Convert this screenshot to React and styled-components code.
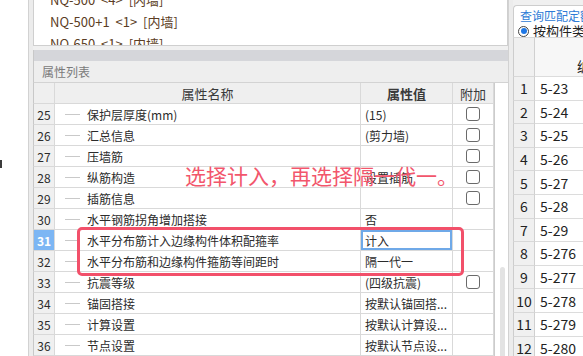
import React from "react";
import styled, { createGlobalStyle } from "styled-components";

const GlobalStyle = createGlobalStyle`
  html, body {
    margin: 0;
    padding: 0;
    background: #ffffff;
    overflow: hidden;
  }
  body {
    font-family: "Noto Sans CJK SC", "Noto Sans", sans-serif;
  }
`;

const Screen = styled.div`
  display: flex;
  width: 583px;
  height: 356px;
  overflow: hidden;
  background: #ffffff;
`;

const Gutter = styled.div`
  width: 28px;
  flex: none;
  padding-top: 160px;
  box-sizing: border-box;
  background: #ffffff;
`;

const GutterMark = styled.div`
  width: 2px;
  height: 8px;
  background: #3c3c3c;
`;

const Splitter = styled.div`
  width: 5px;
  flex: none;
  box-sizing: border-box;
  background: #ececec;
  border-left: 1px solid #d2d2d2;
`;

const MainPanel = styled.div`
  width: 475px;
  flex: none;
  display: flex;
  flex-direction: column;
  background: #f0f0f0;
`;

const ListBox = styled.div`
  height: 46px;
  flex: none;
  box-sizing: border-box;
  background: #ffffff;
  border: 1px solid #cfcfcf;
  border-top: none;
  overflow: hidden;
`;

const ListInner = styled.div`
  margin-top: -11px;
  padding-left: 16px;
`;

const ListItem = styled.div`
  height: 22px;
  line-height: 22px;
  font-size: 13px;
  color: #5b3d24;
  white-space: nowrap;
  word-spacing: 3px;
`;

const TitleBar = styled.div`
  height: 11px;
  flex: none;
  margin-top: 4px;
  background: #d5d6da;
  border-left: 1px solid #c8c8c8;
`;

const Caption = styled.div`
  height: 22px;
  flex: none;
  box-sizing: border-box;
  padding-left: 8px;
  line-height: 21px;
  font-size: 12px;
  color: #7a7a7a;
  background: #eeeeee;
  border-left: 1px solid #c8c8c8;
  border-bottom: 1px solid #d3d3d3;
`;

const Body = styled.div`
  flex: 1;
  min-height: 0;
  display: flex;
`;

const TableArea = styled.div`
  position: relative;
  width: 461px;
  flex: none;
  background: #ffffff;
  overflow: hidden;
`;

const Row = styled.div`
  display: grid;
  grid-template-columns: 22px 306px 92px 41px;
  height: 21px;
  font-size: 12px;
  color: #2b2b2b;
`;

const Cell = styled.div`
  box-sizing: border-box;
  height: 21px;
  display: flex;
  align-items: center;
  border-right: 1px solid #d9d9d9;
  border-bottom: 1px solid #d9d9d9;
  overflow: hidden;
  white-space: nowrap;
`;

const NumCell = styled(Cell)`
  justify-content: center;
  border-left: 1px solid #c8c8c8;
  background: ${(p) => (p.$active ? "#7cb6f4" : "#f0f0f0")};
  color: ${(p) => (p.$active ? "#ffffff" : "#2b2b2b")};
  font-weight: ${(p) => (p.$active ? 700 : 400)};
`;

const HeadCell = styled(Cell)`
  justify-content: center;
  background: #efefef;
  color: #3a3a3a;
  font-size: 13px;
  font-weight: ${(p) => (p.$bold ? 700 : 400)};
  border-left: ${(p) => (p.$first ? "1px solid #c8c8c8" : "none")};
`;

const NameCell = styled(Cell)`
  padding-left: 10px;
`;

const TreeStub = styled.span`
  width: 15px;
  height: 1px;
  flex: none;
  margin-right: 7px;
  background: #c9c9c9;
`;

const ValueCell = styled(Cell)`
  padding-left: 4px;
  box-shadow: ${(p) => (p.$editing ? "inset 0 0 0 2px #6fa9e8" : "none")};
`;

const CheckCell = styled(Cell)`
  justify-content: center;
`;

const CheckBox = styled.span`
  width: 14px;
  height: 14px;
  box-sizing: border-box;
  border: 1px solid #6a6a6a;
  border-radius: 3px;
  background: #ffffff;
`;

const Scroll = styled.div`
  width: 14px;
  flex: none;
  box-sizing: border-box;
  padding: 184px 0 0 5px;
  background: #ffffff;
  border-left: 1px solid #cccccc;
`;

const Thumb = styled.div`
  width: 5px;
  height: 100px;
  border-radius: 3px;
  background: #e3e3e3;
`;

const RedBox = styled.div`
  position: absolute;
  left: 44px;
  top: 144px;
  width: 387px;
  height: 49px;
  box-sizing: border-box;
  border: 3px solid #f2506a;
  border-radius: 5px;
  pointer-events: none;
`;

const RedNote = styled.div`
  position: absolute;
  left: 152px;
  top: 79px;
  font-size: 21px;
  line-height: 26px;
  color: #f2566c;
  white-space: nowrap;
`;

const RightPanel = styled.div`
  flex: 1;
  min-width: 0;
  display: flex;
  flex-direction: column;
  padding-top: 5px;
  background: #f0f0f0;
  overflow: hidden;
`;

const Tab = styled.div`
  height: 20px;
  flex: none;
  box-sizing: border-box;
  padding-left: 6px;
  line-height: 19px;
  font-size: 12px;
  color: #2e7bd6;
  white-space: nowrap;
  background: #ffffff;
  border: 1px solid #cdcdcd;
  border-right: none;
  border-bottom: none;
  border-top-left-radius: 4px;
`;

const RadioRow = styled.div`
  height: 12px;
  flex: none;
  display: flex;
  align-items: center;
  gap: 4px;
  padding-left: 4px;
  font-size: 13px;
  line-height: 12px;
  color: #222222;
  white-space: nowrap;
  background: #ffffff;
  border-left: 1px solid #cdcdcd;
`;

const Radio = styled.span`
  width: 11px;
  height: 11px;
  flex: none;
  box-sizing: border-box;
  display: flex;
  align-items: center;
  justify-content: center;
  border: 1px solid #444444;
  border-radius: 50%;

  &::after {
    content: "";
    width: 6px;
    height: 6px;
    border-radius: 50%;
    background: #1f77e5;
  }
`;

const CodeRow = styled.div`
  display: grid;
  grid-template-columns: 22px 1fr;
  height: ${(p) => (p.$head ? "40px" : "23.6px")};
  flex: none;
  font-size: 14px;
  color: #222222;
`;

const CodeNum = styled.div`
  box-sizing: border-box;
  display: flex;
  align-items: center;
  justify-content: center;
  background: #f0f0f0;
  border-left: 1px solid #cdcdcd;
  border-right: 1px solid #d0d0d0;
  border-bottom: 1px solid #d8d8d8;
  border-top: ${(p) => (p.$head ? "1px solid #d8d8d8" : "none")};
`;

const CodeCell = styled.div`
  box-sizing: border-box;
  display: flex;
  align-items: ${(p) => (p.$head ? "flex-start" : "center")};
  padding-left: ${(p) => (p.$head ? "42px" : "5px")};
  padding-top: ${(p) => (p.$head ? "18px" : "0")};
  white-space: nowrap;
  background: ${(p) => (p.$head ? "#f7f7f7" : "#ffffff")};
  border-bottom: 1px solid #dcdcdc;
  border-top: ${(p) => (p.$head ? "1px solid #d8d8d8" : "none")};
`;

const listItems = ["NQ-500 <4> [内墙]", "NQ-500+1 <1> [内墙]", "NQ-650 <1> [内墙]"];

const rows = [
  { no: 25, name: "保护层厚度(mm)", value: "(15)", check: true },
  { no: 26, name: "汇总信息", value: "(剪力墙)", check: true },
  { no: 27, name: "压墙筋", value: "", check: true },
  { no: 28, name: "纵筋构造", value: "设置插筋", check: true },
  { no: 29, name: "插筋信息", value: "", check: true },
  { no: 30, name: "水平钢筋拐角增加搭接", value: "否" },
  { no: 31, name: "水平分布筋计入边缘构件体积配箍率", value: "计入", active: true },
  { no: 32, name: "水平分布筋和边缘构件箍筋等间距时", value: "隔一代一" },
  { no: 33, name: "抗震等级", value: "(四级抗震)", check: true },
  { no: 34, name: "锚固搭接", value: "按默认锚固搭..." },
  { no: 35, name: "计算设置", value: "按默认计算设..." },
  { no: 36, name: "节点设置", value: "按默认节点设..." },
];

const codes = ["5-23", "5-24", "5-25", "5-26", "5-27", "5-28", "5-29", "5-276", "5-277", "5-278", "5-279", "5-280"];

const App = () => {
  return (
    <Screen>
      <GlobalStyle />
      <Gutter>
        <GutterMark />
      </Gutter>
      <Splitter />
      <MainPanel>
        <ListBox>
          <ListInner>
            {listItems.map((item) => (
              <ListItem key={item}>{item}</ListItem>
            ))}
          </ListInner>
        </ListBox>
        <TitleBar />
        <Caption>属性列表</Caption>
        <Body>
          <TableArea>
            <Row>
              <HeadCell $first />
              <HeadCell>属性名称</HeadCell>
              <HeadCell $bold>属性值</HeadCell>
              <HeadCell>附加</HeadCell>
            </Row>
            {rows.map((r) => (
              <Row key={r.no}>
                <NumCell $active={r.active}>{r.no}</NumCell>
                <NameCell>
                  <TreeStub />
                  {r.name}
                </NameCell>
                <ValueCell $editing={r.active}>{r.value}</ValueCell>
                <CheckCell>{r.check && <CheckBox />}</CheckCell>
              </Row>
            ))}
            <RedBox />
            <RedNote>选择计入，再选择隔一代一。</RedNote>
          </TableArea>
          <Scroll>
            <Thumb />
          </Scroll>
        </Body>
      </MainPanel>
      <Splitter />
      <RightPanel>
        <Tab>查询匹配定额</Tab>
        <RadioRow>
          <Radio />
          按构件类型过滤
        </RadioRow>
        <CodeRow $head>
          <CodeNum $head />
          <CodeCell $head>编码</CodeCell>
        </CodeRow>
        {codes.map((c, i) => (
          <CodeRow key={c}>
            <CodeNum>{i + 1}</CodeNum>
            <CodeCell>{c}</CodeCell>
          </CodeRow>
        ))}
      </RightPanel>
    </Screen>
  );
};

export default App;
